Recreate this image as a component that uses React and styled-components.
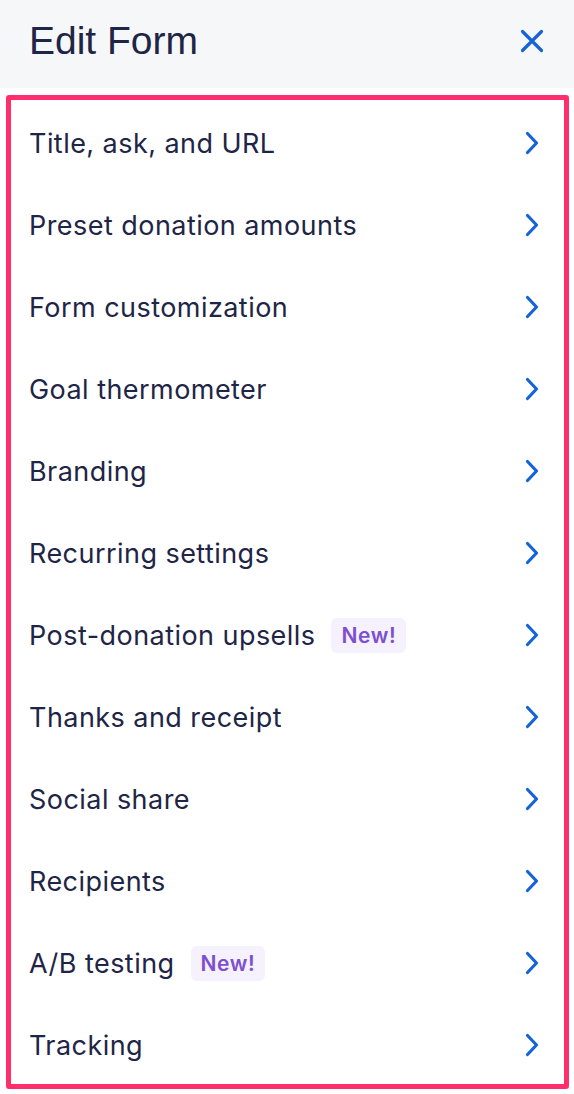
import React from 'react';
import styled, { createGlobalStyle } from 'styled-components';

const GlobalStyle = createGlobalStyle`
  html, body {
    margin: 0;
    padding: 0;
    background: #ffffff;
  }
  body {
    font-family: Inter, "Noto Sans", sans-serif;
    -webkit-font-smoothing: antialiased;
  }
`;

const Page = styled.div`
  width: 574px;
  min-height: 1094px;
  background: #ffffff;
`;

const Header = styled.header`
  height: 88px;
  background: #f6f7f9;
  display: flex;
  align-items: center;
  justify-content: space-between;
  padding: 0 30px 6px 29px;
  box-sizing: border-box;
`;

const Title = styled.h1`
  margin: 0;
  font-family: "Liberation Sans", Arial, sans-serif;
  font-weight: 400;
  font-size: 39px;
  color: #1e2546;
`;

const CloseButton = styled.button`
  border: 0;
  background: none;
  padding: 0;
  width: 24px;
  height: 24px;
  display: flex;
  align-items: center;
  justify-content: center;
  cursor: pointer;
`;

const Outline = styled.div`
  margin: 7px 5px 0 6px;
  border: 5px solid #ff2e6d;
  border-radius: 3px;
`;

const List = styled.ul`
  list-style: none;
  margin: 0;
  padding: 0;
`;

const Row = styled.li`
  height: 82px;
  box-sizing: border-box;
  padding: 4px 25px 0 18px;
  display: flex;
  align-items: center;
  cursor: pointer;
`;

const Label = styled.span`
  font-size: 27px;
  color: #1e2546;
  letter-spacing: 0.45px;
`;

const Badge = styled.span`
  margin-left: 16px;
  height: 35px;
  padding: 0 10px;
  display: inline-flex;
  align-items: center;
  border-radius: 6px;
  background: #f5f1fd;
  color: #7c50cf;
  font-size: 21px;
  font-weight: 600;
  letter-spacing: 0.6px;
`;

const Chevron = styled.svg`
  margin-left: auto;
  flex-shrink: 0;
`;

const items = [
  { label: 'Title, ask, and URL' },
  { label: 'Preset donation amounts' },
  { label: 'Form customization' },
  { label: 'Goal thermometer' },
  { label: 'Branding' },
  { label: 'Recurring settings' },
  { label: 'Post-donation upsells', isNew: true },
  { label: 'Thanks and receipt' },
  { label: 'Social share' },
  { label: 'Recipients' },
  { label: 'A/B testing', isNew: true },
  { label: 'Tracking' },
];

export default function App() {
  return (
    <Page>
      <GlobalStyle />
      <Header>
        <Title>Edit Form</Title>
        <CloseButton aria-label="Close">
          <svg width="24" height="24" viewBox="0 0 24 24">
            <path d="M2.5 2.5 L21.5 21.5 M21.5 2.5 L2.5 21.5" stroke="#1464d8" strokeWidth="3.2" strokeLinecap="round" fill="none" />
          </svg>
        </CloseButton>
      </Header>
      <Outline>
        <List>
          {items.map((item, index) => (
            <Row key={index}>
              <Label>{item.label}</Label>
              {item.isNew && <Badge>New!</Badge>}
              <Chevron width="14" height="24" viewBox="0 0 14 24">
                <path d="M2.5 2.5 L11.5 12 L2.5 21.5" stroke="#1464d8" strokeWidth="3.2" strokeLinecap="round" strokeLinejoin="round" fill="none" />
              </Chevron>
            </Row>
          ))}
        </List>
      </Outline>
    </Page>
  );
}
